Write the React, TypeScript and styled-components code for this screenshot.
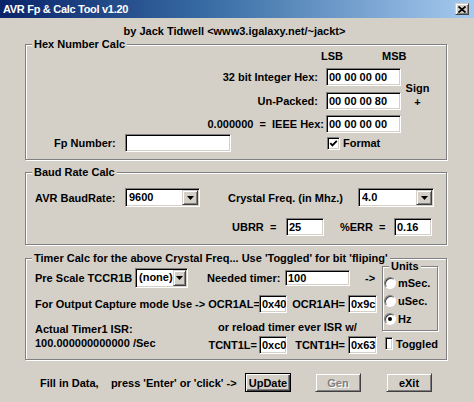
import styled, { createGlobalStyle, css } from 'styled-components';

const GlobalStyle = createGlobalStyle`
  html, body {
    margin: 0;
    padding: 0;
    background: #d4d0c8;
  }
  body {
    font: 700 11px 'Liberation Sans', Arial, sans-serif;
    color: #000;
  }
  * {
    box-sizing: border-box;
  }
`;

const sunken = css`
  background: #fff;
  border: 1px solid;
  border-color: #808080 #fff #fff #808080;
  box-shadow: inset 1px 1px #000, inset -1px -1px #d4d0c8;
`;

const raised = css`
  background: #d4d0c8;
  border: 1px solid;
  border-color: #d4d0c8 #404040 #404040 #d4d0c8;
  box-shadow: inset 1px 1px #fff, inset -1px -1px #808080;
`;

function DropArrow() {
  return (
    <svg width="7" height="4" viewBox="0 0 7 4">
      <path d="M0 0H7L3.5 4Z" fill="#000" />
    </svg>
  );
}

function Check() {
  return (
    <svg width="9" height="9" viewBox="0 0 9 9">
      <path d="M1.3 4.2 L3.4 6.4 L7.8 1.8" fill="none" stroke="#000" strokeWidth="1.8" />
    </svg>
  );
}

export default function App() {
  return (
    <>
      <GlobalStyle />
      <Window>
        <TitleBar>
          <Title>AVR Fp &amp; Calc Tool v1.20</Title>
          <CloseButton>
            <svg width="8" height="7" viewBox="0 0 8 7">
              <path d="M0.5 0.5L7.5 6.5M7.5 0.5L0.5 6.5" stroke="#000" strokeWidth="1.7" />
            </svg>
          </CloseButton>
        </TitleBar>

        <Body>
          <Byline>by Jack Tidwell &lt;www3.igalaxy.net/~jackt&gt;</Byline>

          <Group $top={7}>
            <Legend>Hex Number Calc</Legend>
            <HexBody>
              <HexRows>
                <ColumnHeads>
                  <Label $w={61}>LSB</Label>
                  <Label>MSB</Label>
                </ColumnHeads>
                <HexRow $gap={6}>
                  <Label $align="right" $pad={8}>32 bit Integer Hex:</Label>
                  <Field $w={75}>00 00 00 00</Field>
                </HexRow>
                <HexRow $gap={6}>
                  <Label $align="right" $pad={8}>Un-Packed:</Label>
                  <Field $w={75}>00 00 00 80</Field>
                </HexRow>
                <HexRow $gap={5}>
                  <Label $align="right" $pad={2}>{'0.000000  =  IEEE Hex:'}</Label>
                  <Field $w={75}>00 00 00 00</Field>
                </HexRow>
                <HexRow $gap={1}>
                  <FpCell>
                    <Label $w={71}>Fp Number:</Label>
                    <Field $w={106} />
                  </FpCell>
                  <CheckLabel $ml={1}>
                    <CheckBox>
                      <Check />
                    </CheckBox>
                    Format
                  </CheckLabel>
                </HexRow>
              </HexRows>
              <SignCol>
                <span>Sign</span>
                <Plus>+</Plus>
              </SignCol>
            </HexBody>
          </Group>

          <Group $top={12}>
            <Legend>Baud Rate Calc</Legend>
            <BaudBody>
              <FlowRow $h={19} $pl={9}>
                <Label $w={90}>AVR BaudRate:</Label>
                <Combo $w={75} $h={19}>
                  <ComboText>9600</ComboText>
                  <DropButton>
                    <DropArrow />
                  </DropButton>
                </Combo>
                <Label $w={130} $ml={28}>Crystal Freq. (in Mhz.)</Label>
                <Combo $w={76} $h={19}>
                  <ComboText>4.0</ComboText>
                  <DropButton>
                    <DropArrow />
                  </DropButton>
                </Combo>
              </FlowRow>
              <FlowRow $h={18} $pl={206} $gap={11}>
                <Label $w={54}>{'UBRR  ='}</Label>
                <Field $w={38}>25</Field>
                <Label $w={54} $ml={16}>{'%ERR  ='}</Label>
                <Field $w={38}>0.16</Field>
              </FlowRow>
            </BaudBody>
          </Group>

          <Group $top={13}>
            <Legend>Timer Calc for the above Crystal Freq... Use 'Toggled' for bit 'fliping'</Legend>
            <TimerBody>
              <TimerMain>
                <FlowRow $h={20} $pl={9}>
                  <Label $w={100}>Pre Scale TCCR1B</Label>
                  <Combo $w={53} $h={20}>
                    <ComboText>(none)</ComboText>
                    <DropButton>
                      <DropArrow />
                    </DropButton>
                  </Combo>
                  <Label $w={78} $ml={19}>Needed timer:</Label>
                  <Field $w={65} $h={16}>100</Field>
                  <Label $ml={15}>-&gt;</Label>
                </FlowRow>
                <FlowRow $h={18} $pl={9} $gap={7}>
                  <Label $w={224}>For Output Capture mode Use -&gt; OCR1AL=</Label>
                  <Field $w={28}>0x40</Field>
                  <Label $w={61} $align="right" $pad={3}>OCR1AH=</Label>
                  <Field $w={29}>0x9c</Field>
                </FlowRow>
                <ReloadArea>
                  <IsrText>
                    Actual Timer1 ISR:
                    <br />
                    100.000000000000 /Sec
                  </IsrText>
                  <div>
                    <ReloadNote>or reload timer ever ISR w/</ReloadNote>
                    <FlowRow $h={18} $gap={3}>
                      <Label $w={56} $align="right" $pad={2}>TCNT1L=</Label>
                      <Field $w={28}>0xc0</Field>
                      <Label $w={61} $align="right" $pad={3}>TCNT1H=</Label>
                      <Field $w={29}>0x63</Field>
                    </FlowRow>
                  </div>
                </ReloadArea>
              </TimerMain>
              <TimerSide>
                <Group $top={2}>
                  <Legend>Units</Legend>
                  <RadioList>
                    <RadioRow $h={18}>
                      <Radio />
                      mSec.
                    </RadioRow>
                    <RadioRow $h={18}>
                      <Radio />
                      uSec.
                    </RadioRow>
                    <RadioRow $h={17}>
                      <Radio $checked />
                      Hz
                    </RadioRow>
                  </RadioList>
                </Group>
                <CheckLabel $ml={3} $top={6}>
                  <CheckBox />
                  Toggled
                </CheckLabel>
              </TimerSide>
            </TimerBody>
          </Group>

          <ButtonBar>
            <Label $w={205}>{'Fill in Data,    press \'Enter\' or \'click\' ->'}</Label>
            <Button $default>UpDate</Button>
            <Button $disabled $ml={24}>Gen</Button>
            <Button $ml={25}>eXit</Button>
          </ButtonBar>
        </Body>
      </Window>
    </>
  );
}

const Window = styled.div`
  width: 474px;
  height: 402px;
  overflow: hidden;
  background: #d4d0c8;
  display: flex;
  flex-direction: column;
`;

const TitleBar = styled.div`
  height: 18px;
  flex: none;
  display: flex;
  align-items: center;
  justify-content: space-between;
  padding: 0 5px 0 3px;
  background: linear-gradient(90deg, #0a246a 0%, #3a6ea5 45%, #a6caf0 100%);
  color: #fff;
`;

const Title = styled.span`
  letter-spacing: -0.3px;
  line-height: 12px;
`;

const CloseButton = styled.span`
  ${raised};
  width: 14px;
  height: 12px;
  display: flex;
  align-items: center;
  justify-content: center;
`;

const Body = styled.div`
  padding: 7px 27px 0 25px;
`;

const Byline = styled.div`
  text-align: center;
  line-height: 12px;
  padding-right: 3px;
`;

const Group = styled.div<{ $top: number }>`
  margin-top: ${(p) => p.$top}px;
  border: 1px solid #808080;
  box-shadow: inset 1px 1px #fff, 1px 1px #fff;
`;

const Legend = styled.div`
  width: fit-content;
  margin: -7px 0 0 6px;
  padding: 0 2px;
  line-height: 12px;
  background: #d4d0c8;
  white-space: nowrap;
`;

const Label = styled.span<{ $w?: number; $align?: 'left' | 'right'; $pad?: number; $ml?: number }>`
  display: block;
  flex: none;
  width: ${(p) => (p.$w ? `${p.$w}px` : 'auto')};
  margin-left: ${(p) => p.$ml ?? 0}px;
  padding-right: ${(p) => p.$pad ?? 0}px;
  text-align: ${(p) => p.$align ?? 'left'};
  line-height: 12px;
  white-space: pre;
`;

const Field = styled.div<{ $w: number; $h?: number }>`
  ${sunken};
  flex: none;
  width: ${(p) => p.$w}px;
  height: ${(p) => p.$h ?? 18}px;
  line-height: ${(p) => (p.$h ?? 18) - 2}px;
  padding-left: 2px;
  white-space: nowrap;
  overflow: hidden;
`;

const HexBody = styled.div`
  display: flex;
  padding-bottom: 7px;
`;

const HexRows = styled.div`
  width: 375px;
`;

const ColumnHeads = styled.div`
  display: flex;
  height: 12px;
  padding-left: 295px;
`;

const HexRow = styled.div<{ $gap: number }>`
  display: grid;
  grid-template-columns: 300px 75px;
  align-items: center;
  height: 18px;
  margin-top: ${(p) => p.$gap}px;
`;

const FpCell = styled.div`
  display: flex;
  align-items: center;
  padding-left: 28px;
`;

const SignCol = styled.div`
  width: 33px;
  padding-top: 32px;
  display: flex;
  flex-direction: column;
  align-items: center;
  line-height: 12px;
`;

const Plus = styled.span`
  margin-top: 2px;
`;

const CheckLabel = styled.label<{ $ml?: number; $top?: number }>`
  display: flex;
  align-items: center;
  gap: 3px;
  margin-left: ${(p) => p.$ml ?? 0}px;
  margin-top: ${(p) => p.$top ?? 0}px;
  line-height: 12px;
`;

const CheckBox = styled.span`
  ${sunken};
  width: 13px;
  height: 13px;
  display: flex;
  align-items: center;
  justify-content: center;
`;

const BaudBody = styled.div`
  padding: 10px 0 8px;
`;

const FlowRow = styled.div<{ $h: number; $pl?: number; $gap?: number }>`
  display: flex;
  align-items: center;
  height: ${(p) => p.$h}px;
  padding-left: ${(p) => p.$pl ?? 0}px;
  margin-top: ${(p) => p.$gap ?? 0}px;
`;

const Combo = styled.div<{ $w: number; $h: number }>`
  ${sunken};
  flex: none;
  width: ${(p) => p.$w}px;
  height: ${(p) => p.$h}px;
  display: flex;
  align-items: stretch;
  padding: 1px;
`;

const ComboText = styled.span`
  flex: 1;
  padding-left: 2px;
  line-height: ${() => 15}px;
  white-space: nowrap;
`;

const DropButton = styled.span`
  ${raised};
  width: 16px;
  display: flex;
  align-items: center;
  justify-content: center;
`;

const TimerBody = styled.div`
  display: flex;
  padding-bottom: 5px;
`;

const TimerMain = styled.div`
  width: 356px;
  padding-top: 4px;
`;

const ReloadArea = styled.div`
  display: flex;
  margin-top: 8px;
  padding-left: 9px;
`;

const IsrText = styled.div`
  width: 168px;
  padding-top: 1px;
  line-height: 14px;
`;

const ReloadNote = styled.div`
  padding-left: 15px;
  line-height: 12px;
`;

const TimerSide = styled.div`
  width: 56px;
`;

const RadioList = styled.div`
  padding: 2px 0 3px 1px;
`;

const RadioRow = styled.label<{ $h: number }>`
  display: flex;
  align-items: center;
  gap: 2px;
  height: ${(p) => p.$h}px;
  line-height: 12px;
`;

const Radio = styled.span<{ $checked?: boolean }>`
  width: 12px;
  height: 12px;
  border-radius: 50%;
  background: #fff;
  border: 1px solid;
  border-color: #808080 #fff #fff #808080;
  box-shadow: inset 1px 1px #404040;
  display: flex;
  align-items: center;
  justify-content: center;

  ${(p) =>
    p.$checked &&
    css`
      &::after {
        content: '';
        width: 4px;
        height: 4px;
        border-radius: 50%;
        background: #000;
      }
    `}
`;

const ButtonBar = styled.div`
  display: flex;
  align-items: center;
  height: 19px;
  margin-top: 13px;
  padding-left: 15px;
`;

const Button = styled.div<{ $default?: boolean; $disabled?: boolean; $ml?: number }>`
  ${raised};
  width: 46px;
  height: 19px;
  margin-left: ${(p) => p.$ml ?? 0}px;
  display: flex;
  align-items: center;
  justify-content: center;
  line-height: 12px;

  ${(p) =>
    p.$default &&
    css`
      border-color: #000;
      box-shadow: inset 1px 1px #fff, inset -1px -1px #404040, inset -2px -2px #808080;
    `}

  ${(p) =>
    p.$disabled &&
    css`
      color: #808080;
      text-shadow: 1px 1px #fff;
    `}
`;
